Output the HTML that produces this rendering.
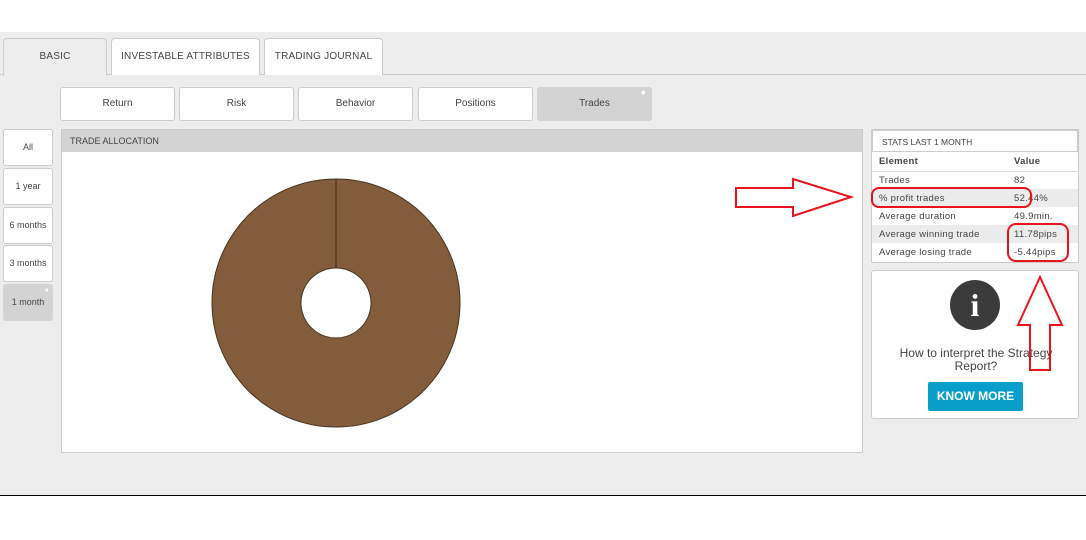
<!DOCTYPE html>
<html><head><style>
*{margin:0;padding:0;box-sizing:border-box}
body{width:1086px;height:540px;background:#fff;font-family:"Liberation Sans",sans-serif;position:relative;overflow:hidden;color:#333}
.bg{position:absolute;left:0;top:32px;width:1086px;height:464px;background:#ededed;border-bottom:1px solid #000}
.a{position:absolute}
.tab{position:absolute;top:38px;height:37px;border:1px solid #ccc;border-bottom:none;border-radius:4px 4px 0 0;background:#fff;font-size:10px;text-align:center;line-height:36px;color:#444;letter-spacing:.2px}
.btn{position:absolute;top:87px;height:34px;width:115px;background:#fff;border:1px solid #ccc;border-radius:3px;font-size:10px;text-align:center;line-height:32px;color:#444}
.side{position:absolute;left:3px;width:50px;height:37px;background:#fff;border:1px solid #ccc;border-radius:3px;font-size:9px;text-align:center;line-height:35px;color:#444}
table{border-collapse:collapse;width:100%;font-size:9.5px;letter-spacing:.3px}
td{height:18px;padding-left:7px;color:#444}
</style></head><body>
<div class="bg"></div>
<div class="a" style="left:0;top:74px;width:1086px;height:1px;background:#ccc"></div>
<div class="tab" style="left:3px;width:104px;background:#ededed;height:38px">BASIC</div>
<div class="tab" style="left:111px;width:149px">INVESTABLE ATTRIBUTES</div>
<div class="tab" style="left:264px;width:119px">TRADING JOURNAL</div>
<div class="btn" style="left:60px">Return</div>
<div class="btn" style="left:179px">Risk</div>
<div class="btn" style="left:298px">Behavior</div>
<div class="btn" style="left:418px">Positions</div>
<div class="btn" style="left:537px;background:#d3d3d3;border-color:#d3d3d3">Trades<span class="a" style="right:5px;top:-12px;color:#fff;font-size:9px">●</span></div>
<div class="side" style="top:129px">All</div>
<div class="side" style="top:168px">1 year</div>
<div class="side" style="top:207px">6 months</div>
<div class="side" style="top:245px">3 months</div>
<div class="side" style="top:284px;background:#d3d3d3;border-color:#d3d3d3">1 month<span class="a" style="right:3px;top:-12px;color:#fff;font-size:7px">●</span></div>
<div class="a" style="left:61px;top:129px;width:802px;height:324px;background:#fff;border:1px solid #ccc">
<div style="height:22px;background:#d3d3d3;font-size:9px;line-height:22px;padding-left:8px;color:#444">TRADE ALLOCATION</div>
<svg class="a" style="left:0;top:0" width="800" height="322"><path fill-rule="evenodd" fill="#825c3b" stroke="#4a3420" d="M274 49a124 124 0 1 0 .01 0zM274 138a35 35 0 1 1-.01 0z"/><line x1="274" y1="49" x2="274" y2="138" stroke="#3a2a1a"/></svg>
</div>
<div class="a" style="left:871px;top:129px;width:208px;height:134px;background:#fff;border:1px solid #ccc">
<div style="height:22px;border:1px solid #ccc;font-size:8.5px;line-height:22px;padding-left:9px;color:#444">STATS LAST 1 MONTH</div>
<table>
<tr style="border-bottom:1px solid #ddd"><td style="font-weight:bold;height:19px;width:136px">Element</td><td style="font-weight:bold;padding-left:6px">Value</td></tr>
<tr><td>Trades</td><td style="padding-left:6px">82</td></tr>
<tr style="background:#ececec"><td>% profit trades</td><td style="padding-left:6px">52.44%</td></tr>
<tr><td>Average duration</td><td style="padding-left:6px">49.9min.</td></tr>
<tr style="background:#ececec"><td>Average winning trade</td><td style="padding-left:6px">11.78pips</td></tr>
<tr><td>Average losing trade</td><td style="padding-left:6px">-5.44pips</td></tr>
</table></div>
<div class="a" style="left:871px;top:270px;width:208px;height:149px;background:#fff;border:1px solid #ccc;border-radius:3px">
<div class="a" style="left:78px;top:9px;width:50px;height:50px;border-radius:50%;background:#3b3b3b;color:#fff;font:bold 32px 'Liberation Serif',serif;text-align:center;line-height:50px">i</div>
<div class="a" style="left:0;top:76px;width:208px;text-align:center;font-size:12px;color:#444;line-height:13px">How to interpret the Strategy<br>Report?</div>
<div class="a" style="left:56px;top:111px;width:95px;height:29px;background:#0a9fca;border-radius:2px;color:#fff;font-size:12px;font-weight:bold;text-align:center;line-height:29px">KNOW MORE</div>
</div>
<svg class="a" style="left:0;top:0" width="1086" height="540" fill="none" stroke="#e8141c" stroke-width="2">
<path d="M736 188H793V179L851 197L793 216V207H736Z"/>
<rect x="872" y="188" width="159" height="19" rx="7"/>
<rect x="1008" y="224" width="60" height="37" rx="8"/>
<path d="M1030 370V325H1018L1040 277L1062 325H1050V370Z"/>
</svg>
</body></html>
